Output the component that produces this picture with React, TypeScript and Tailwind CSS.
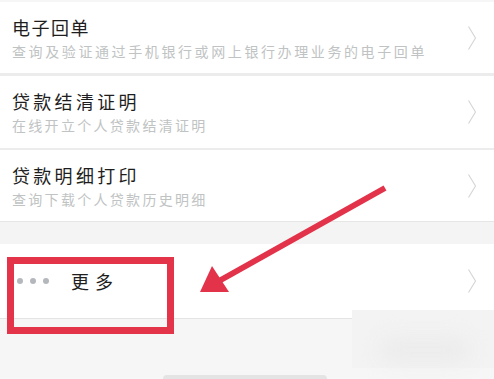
import React from "react";

interface Item {
  title: string;
  subtitle: string;
  titleTrack: string;
  subTrack: string;
  height: string;
}

const items: Item[] = [
  {
    title: "电子回单",
    subtitle: "查询及验证通过手机银行或网上银行办理业务的电子回单",
    titleTrack: "tracking-[1.5px]",
    subTrack: "tracking-[2.6px]",
    height: "h-[71px]",
  },
  {
    title: "贷款结清证明",
    subtitle: "在线开立个人贷款结清证明",
    titleTrack: "tracking-[3.3px]",
    subTrack: "tracking-[2.3px]",
    height: "h-[72px]",
  },
  {
    title: "贷款明细打印",
    subtitle: "查询下载个人贷款历史明细",
    titleTrack: "tracking-[3.3px]",
    subTrack: "tracking-[2.3px]",
    height: "h-[71px]",
  },
];

function Chevron() {
  return (
    <svg width="10" height="26" viewBox="0 0 10 26" className="shrink-0">
      <path d="M1.5 1.5 L8.5 13 L1.5 24.5" fill="none" stroke="#d4d4d4" strokeWidth="1.1" />
    </svg>
  );
}

export default function App() {
  return (
    <div
      className="relative w-[494px] h-[379px] overflow-hidden bg-[#f6f6f6]"
      style={{ fontFamily: '"Noto Sans CJK SC", "Noto Sans", sans-serif' }}
    >
      <div className="flex flex-col pt-[2px]">
        <div className="flex flex-col gap-[3px] bg-[#ececec]">
          {items.map((it, i) => (
            <div
              key={it.title}
              className={`flex items-center justify-between bg-white pl-3 pr-[17px] ${it.height} ${i === 1 ? "mb-[-1px]" : ""}`}
            >
              <div className="flex flex-col gap-[4px] self-start pt-[14px]">
                <div className={`text-[18px] leading-[22px] text-[#1e1e1e] ${it.titleTrack}`}>{it.title}</div>
                <div className={`text-[14px] leading-[18px] text-[#c0c3c3] ${it.subTrack}`}>{it.subtitle}</div>
              </div>
              <Chevron />
            </div>
          ))}
        </div>

        <div className="h-[23px] bg-[#f4f4f4] border-t border-[#e6e6e6]" />

        <div className="flex h-[74px] items-center justify-between bg-white pl-[17px] pr-[17px]">
          <div className="flex items-center">
            <div className="flex gap-[7px]">
              <span className="h-[6px] w-[6px] rounded-full bg-[#b4b8bc]" />
              <span className="h-[6px] w-[6px] rounded-full bg-[#b4b8bc]" />
              <span className="h-[6px] w-[6px] rounded-full bg-[#b4b8bc]" />
            </div>
            <span className="ml-[22px] text-[18px] leading-[22px] tracking-[6px] text-[#1e1e1e]">更多</span>
          </div>
          <Chevron />
        </div>
        <div className="h-px w-[352px] bg-[#e4e4e4]" />
      </div>

      {/* blurred smudge bottom right */}
      <div className="absolute left-[352px] top-[310px] h-[58px] w-[142px] bg-[#f3f3f3]" />
      <div className="absolute left-[380px] top-[338px] h-[24px] w-[90px] rounded-full bg-[#ebebeb] blur-[10px]" />

      {/* bottom bar */}
      <div className="absolute left-[163px] top-[375px] h-[4px] w-[164px] rounded-t-sm bg-[#e4e4e4]" />

      {/* red box highlight */}
      <div className="absolute left-[7px] top-[257px] h-[77px] w-[167px] border-[7px] border-[#e3344a]" />

      {/* arrow */}
      <svg className="absolute left-0 top-0" width="494" height="379" viewBox="0 0 494 379">
        <line x1="385" y1="188" x2="219" y2="281" stroke="#e2334b" strokeWidth="6" strokeLinecap="butt" />
        <polygon points="200,292 212,266 229,292" fill="#e2334b" />
      </svg>
    </div>
  );
}
